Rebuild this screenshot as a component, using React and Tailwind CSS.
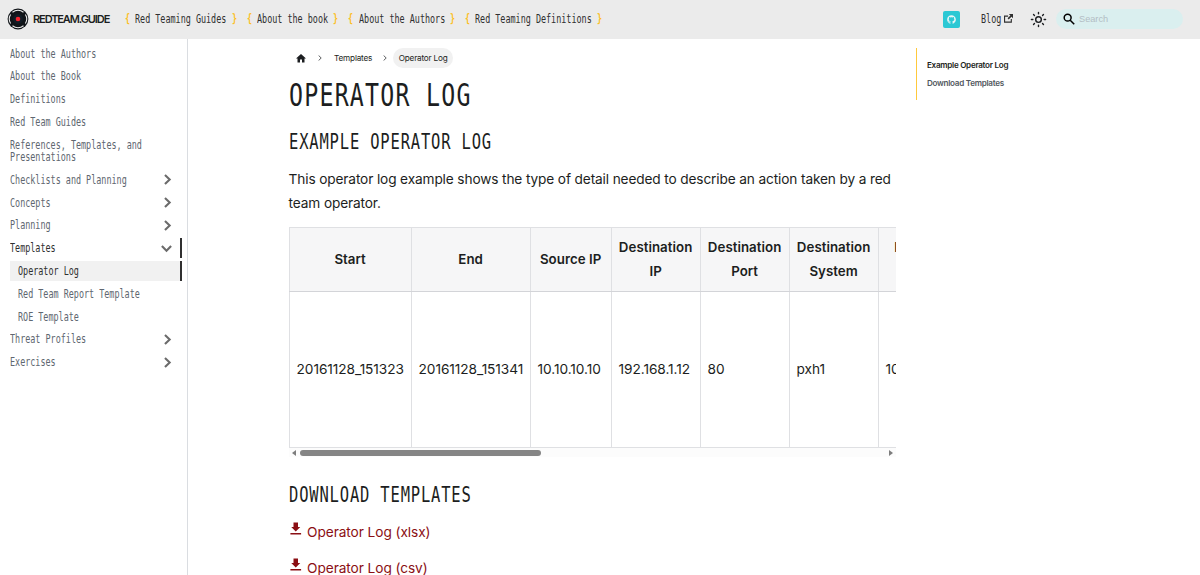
import { FaGithub } from 'react-icons/fa'

const NAV_LINKS = [
  'Red Teaming Guides',
  'About the book',
  'About the Authors',
  'Red Teaming Definitions',
]

const SIDEBAR = [
  { label: 'About the Authors' },
  { label: 'About the Book' },
  { label: 'Definitions' },
  { label: 'Red Team Guides' },
  { label: 'References, Templates, and', second: 'Presentations' },
  { label: 'Checklists and Planning', icon: 'right' },
  { label: 'Concepts', icon: 'right' },
  { label: 'Planning', icon: 'right' },
  { label: 'Templates', icon: 'down', open: true },
  { label: 'Operator Log', child: true, current: true },
  { label: 'Red Team Report Template', child: true },
  { label: 'ROE Template', child: true },
  { label: 'Threat Profiles', icon: 'right' },
  { label: 'Exercises', icon: 'right' },
]

const COLUMNS = [
  { head: ['Start'], value: '20161128_151323', width: 'w-[122px]' },
  { head: ['End'], value: '20161128_151341', width: 'w-[119px]' },
  { head: ['Source IP'], value: '10.10.10.10', width: 'w-[81px]' },
  { head: ['Destination', 'IP'], value: '192.168.1.12', width: 'w-[89px]' },
  { head: ['Destination', 'Port'], value: '80', width: 'w-[89px]' },
  { head: ['Destination', 'System'], value: 'pxh1', width: 'w-[89px]' },
  { head: ['Pivot', 'IP'], value: '10.10.10.10', width: 'w-[65px]' },
]

const MONO_SIZES = {
  sm: { advance: 5.08, className: 'text-[11.7px] scale-x-[0.7212]' },
  h2: { advance: 10.15, className: 'text-[21.5px] tracking-[1.15px] scale-x-[0.72]' },
  h1: { advance: 15.22, className: 'text-[32.3px] tracking-[1.69px] scale-x-[0.72]' },
}

// Condensed monospace text, the wrapper takes the narrowed width
function Mono({ children, size = 'sm' }) {
  const { advance, className } = MONO_SIZES[size]
  return (
    <span className="flex" style={{ width: children.length * advance }}>
      <span className={`block shrink-0 origin-left whitespace-pre font-['DejaVu_Sans_Mono',monospace] ${className}`}>
        {children}
      </span>
    </span>
  )
}

function Chevron({ className, width = 2 }) {
  return (
    <svg viewBox="0 0 10 10" fill="none" stroke="currentColor" strokeWidth={width} className={className}>
      <path d="M2.7 0.8 7 5 2.7 9.2" />
    </svg>
  )
}

function Logo() {
  return (
    <svg viewBox="0 0 22 22" className="size-[22px]">
      <circle cx="11" cy="11" r="10.4" fill="#101418" />
      <path
        d="M5.5 4.2A8.7 8.7 0 0 1 16.5 4.2M5.5 17.8A8.7 8.7 0 0 0 16.5 17.8M3.6 6.5A8.7 8.7 0 0 0 3.6 15.5M18.4 6.5A8.7 8.7 0 0 1 18.4 15.5"
        fill="none"
        stroke="#ebebeb"
        strokeWidth="1.1"
      />
      <circle cx="11" cy="11" r="5" fill="#111c25" />
      <circle cx="11" cy="11" r="2.3" fill="#f5222d" />
    </svg>
  )
}

function Header() {
  return (
    <header className="flex h-[38.5px] items-center bg-[#ebebeb] pl-[7px] pr-[17px] text-[#303030]">
      <Logo />
      <span className="ml-1 w-[92px] whitespace-nowrap pt-px text-[11px] font-semibold leading-none tracking-[-1.1px] text-[#1c1e21]">
        REDTEAM.GUIDE
      </span>
      <nav className="flex gap-[10.3px] leading-5">
        {NAV_LINKS.map((label) => (
          <a key={label} className="flex gap-[5px]">
            <span className="font-bold text-[#fbbf24]"><Mono>{'{'}</Mono></span>
            <Mono>{label}</Mono>
            <span className="font-bold text-[#fbbf24]"><Mono>{'}'}</Mono></span>
          </a>
        ))}
      </nav>
      <div className="ml-auto flex items-center">
        <span className="flex size-[17px] items-center justify-center rounded-[2px] bg-[#2bc8d4]">
          <FaGithub className="size-[9px] text-[#e7f5f5]" />
        </span>
        <a className="ml-[21px] flex items-center leading-5">
          <Mono>Blog</Mono>
          <svg viewBox="0 0 24 24" fill="currentColor" className="-mt-[2px] ml-[2.5px] size-[9px]">
            <path d="M21 13v10H0V4h11v3H3v13h15v-7h3zm3-13H13l4 4-7.5 7.5 3 3L20 7l4 4V0z" />
          </svg>
        </a>
        <svg viewBox="0 0 24 24" fill="none" stroke="#1c1e21" strokeWidth="2" strokeLinecap="round" className="ml-[17px] size-[17px]">
          <circle cx="12" cy="12" r="4" />
          <path d="M12 2v2M12 20v2M2 12h2M20 12h2M5 5l1.3 1.3M17.7 17.7 19 19M5 19l1.3-1.3M17.7 6.3 19 5" />
        </svg>
        <div className="ml-[9px] flex h-5 w-[127px] items-center rounded-full bg-[#daefef] pl-[7px]">
          <svg viewBox="0 0 16 16" fill="none" stroke="#000" strokeWidth="2" className="size-[12px]">
            <circle cx="6.2" cy="6.2" r="4.6" />
            <path d="M9.6 9.6 15 15" />
          </svg>
          <span className="ml-1 pt-px font-['Liberation_Sans',sans-serif] text-[9.2px] text-[#b3bdc4]">Search</span>
        </div>
      </div>
    </header>
  )
}

function SidebarItem({ item }) {
  const active = item.open || item.current
  return (
    <li
      className={`flex justify-between leading-[12.5px] ${item.second ? 'h-[32.4px]' : 'h-5'} ${
        item.child ? 'pl-[7.6px]' : ''
      } ${item.current ? 'bg-[#f1f1f1]' : ''} ${active ? 'border-r-2 border-[#303030] text-[#303030]' : 'mr-0.5 text-[#606770]'}`}
    >
      <span className="flex flex-col pt-[4px]">
        <Mono>{item.label}</Mono>
        {item.second && <Mono>{item.second}</Mono>}
      </span>
      {item.icon && (
        <Chevron
          width={1.9}
          className={`mt-[4.5px] size-[11px] text-[#6b6b6b] ${item.icon === 'down' ? 'mr-[8.5px] rotate-90' : 'mr-[7px]'}`}
        />
      )}
    </li>
  )
}

function LogTable() {
  return (
    <div className="mt-[12px] w-[607.5px] overflow-hidden">
      <table className="w-[654px] table-fixed border-collapse text-[14px] leading-[23.5px]">
        <thead>
          <tr className="h-[64px] bg-[#f6f6f7]">
            {COLUMNS.map((col, i) => (
              <th
                key={i}
                className={`border border-[#dfe0e3] border-b-[#d3d4d8] p-0 text-center text-[13.3px] font-semibold tracking-[0.03px] ${col.width}`}
              >
                {col.head.map((line) => (
                  <div key={line}>{line}</div>
                ))}
              </th>
            ))}
          </tr>
        </thead>
        <tbody>
          <tr className="h-[156px]">
            {COLUMNS.map((col, i) => (
              <td key={i} className="whitespace-nowrap border border-[#dfe0e3] py-0 pl-[7px] pr-0 text-[13.7px] tracking-[-0.08px]">
                {col.value}
              </td>
            ))}
          </tr>
        </tbody>
      </table>
      <div className="flex h-[9px] items-center bg-[#fcfcfc] pl-[3px] pr-[3px]">
        <span className="border-y-[3px] border-r-[4.5px] border-y-transparent border-r-[#7d7d7d]" />
        <span className="ml-1 h-[6px] w-[241px] rounded-full bg-[#858585]" />
        <span className="ml-auto border-y-[3px] border-l-[4.5px] border-y-transparent border-l-[#7d7d7d]" />
      </div>
    </div>
  )
}

function DownloadLink({ children }) {
  return (
    <a className="flex h-[36px] text-[13.7px] leading-[24px] tracking-[-0.08px] text-[#8b0f14]">
      <svg viewBox="0 0 24 24" fill="currentColor" className="mr-[5px] mt-0.5 size-[13.5px]">
        <path d="M20 9h-4V1H8v8H4l8 8 8-8zM2.5 19.5V22h19v-2.5z" />
      </svg>
      {children}
    </a>
  )
}

export default function App() {
  return (
    <div className="h-[575px] w-[1200px] overflow-hidden bg-white font-['Inter',sans-serif] text-[#1c1e21]">
      <Header />
      <div className="flex h-[537px]">
        <aside className="w-[188px] shrink-0 border-r border-[#dadde1] pl-[10px] pr-[5px] pt-[5px]">
          <ul className="flex flex-col gap-[2.8px]">
            {SIDEBAR.map((item) => (
              <SidebarItem key={item.label} item={item} />
            ))}
          </ul>
        </aside>
        <main className="ml-[100.6px] w-[608px] shrink-0 pt-[9.5px]">
          <div className="flex h-5 items-center pl-[7px] text-[8.2px] tracking-[-0.2px]">
            <svg viewBox="0 0 20 20" fill="currentColor" className="size-[10px]">
              <path d="M8 19v-6h4v6h5v-8h3L10 2 0 11h3v8z" />
            </svg>
            <Chevron width={1.2} className="ml-[11.5px] size-[6px]" />
            <span className="ml-[11px] w-[38px] whitespace-nowrap">Templates</span>
            <Chevron width={1.2} className="ml-[10px] size-[6px]" />
            <span className="ml-[5px] flex h-5 w-[60px] items-center justify-center whitespace-nowrap rounded-full bg-[#f1f1f1]">
              Operator Log
            </span>
          </div>
          <h1 className="mt-[7px] h-[41px] leading-[40px]">
            <Mono size="h1">OPERATOR LOG</Mono>
          </h1>
          <h2 className="mt-[12px] h-[28px] leading-[28.5px]">
            <Mono size="h2">EXAMPLE OPERATOR LOG</Mono>
          </h2>
          <p className="mt-[12px] whitespace-nowrap text-[13.7px] leading-[23.5px] tracking-[-0.14px]">
            This operator log example shows the type of detail needed to describe an action taken by a red
            <br />
            team operator.
          </p>
          <LogTable />
          <h2 className="mt-[24px] h-[28px] leading-[28.5px]">
            <Mono size="h2">DOWNLOAD TEMPLATES</Mono>
          </h2>
          <div className="mt-[11px]">
            <DownloadLink>Operator Log (xlsx)</DownloadLink>
            <DownloadLink>Operator Log (csv)</DownloadLink>
          </div>
        </main>
        <ul className="ml-[19.4px] mt-[9.5px] flex h-[52px] flex-col justify-center gap-[6px] border-l border-[#ffc93c] pl-[10px] text-[8.1px] font-semibold leading-[12.5px] tracking-[-0.28px]">
          <li>Example Operator Log</li>
          <li className="text-[#525860]">Download Templates</li>
        </ul>
      </div>
    </div>
  )
}
